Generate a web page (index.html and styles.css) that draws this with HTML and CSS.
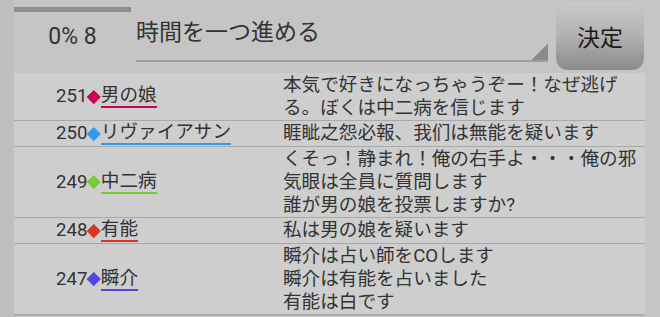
FILE: index.html
```html
<!DOCTYPE html>
<html lang="ja">

<head>
    <meta charset="UTF-8">
    <meta name="viewport" content="width=device-width, initial-scale=1.0">
    <title>ログ</title>
    <link rel="stylesheet" href="styles.css">
</head>

<body>
    <div class="screen">
        <div class="top">
            <div class="turn">
                <div class="bar"></div>
                <div class="count">0% 8</div>
            </div>
            <div class="action">
                <span class="action-text">時間を一つ進める</span>
                <i class="tri"></i>
            </div>
            <button class="decide">決定</button>
        </div>

        <ul class="log">
            <li class="row">
                <div class="who">251<i class="dia c1"></i><span class="name c1">男の娘</span></div>
                <div class="msg">本気で好きになっちゃうぞー！なぜ逃げる。ぼくは中二病を信じます</div>
            </li>
            <li class="row">
                <div class="who">250<i class="dia c2"></i><span class="name c2">リヴァイアサン</span></div>
                <div class="msg">睚眦之怨必報、我们は無能を疑います</div>
            </li>
            <li class="row">
                <div class="who">249<i class="dia c3"></i><span class="name c3">中二病</span></div>
                <div class="msg">くそっ！静まれ！俺の右手よ・・・俺の邪気眼は全員に質問します<br>誰が男の娘を投票しますか?</div>
            </li>
            <li class="row">
                <div class="who">248<i class="dia c4"></i><span class="name c4">有能</span></div>
                <div class="msg">私は男の娘を疑います</div>
            </li>
            <li class="row">
                <div class="who">247<i class="dia c5"></i><span class="name c5">瞬介</span></div>
                <div class="msg">瞬介は占い師をCOします<br>瞬介は有能を占いました<br>有能は白です</div>
            </li>
        </ul>
    </div>
</body>

</html>
```

FILE: styles.css
```css
* {
    margin: 0;
    padding: 0;
    box-sizing: border-box;
}

li {
    list-style-type: none;
}

body {
    background-color: #c5c5c5;
    font-family: Roboto, "Noto Sans CJK JP", sans-serif;
    color: #333;
}

.screen {
    width: 660px;
    height: 317px;
    overflow: hidden;
    padding-left: 14px;
    background: linear-gradient(to right, #bfbfbf 0, #bfbfbf 14px, #c5c5c5 14px);
}

/* 上の操作エリア */
.top {
    display: flex;
    height: 73px;
}

.top .turn {
    width: 117px;
    padding-top: 7px;
}

.top .bar {
    height: 5px;
    background-color: #8e8e8e;
}

.top .count {
    font-size: 23px;
    line-height: 30px;
    text-align: center;
    margin-top: 10px;
}

.top .action {
    position: relative;
    width: 412px;
    height: 62px;
    margin-left: 5px;
    padding-top: 18px;
    border-bottom: 2px solid #9c9c9c;
}

.top .action-text {
    font-size: 23px;
    line-height: 30px;
}

.top .tri {
    position: absolute;
    right: 0;
    bottom: 0;
    width: 16px;
    height: 16px;
    background: linear-gradient(to bottom right, transparent 50%, #8a8a8a 50%);
}

.top .decide {
    width: 88px;
    height: 68px;
    margin: 2px 0 0 8px;
    border: none;
    border-radius: 12px;
    background: linear-gradient(to bottom, #cacaca, #b4b4b4 45%, #8c8c8c);
    font-family: "Noto Sans CJK JP", sans-serif;
    font-size: 23px;
    color: #1a1a1a;
    cursor: pointer;
}

/* ログ一覧 */
.log {
    width: 631px;
    background-color: #cecece;
    border-bottom: 1px solid #b0b0b0;
}

.log .row {
    display: grid;
    grid-template-columns: 269px 1fr;
    min-height: 26px;
    border-bottom: 1px solid #a9a9a9;
    font-size: 18.6px;
    line-height: 23px;
}

.log .who {
    display: flex;
    align-items: center;
    padding-left: 42px;
}

.log .dia {
    width: 9.5px;
    height: 9.5px;
    margin: 0 2px;
    transform: rotate(45deg);
}

.log .name {
    display: inline-block;
    line-height: 21px;
    border-bottom: 2px solid;
    color: #333;
}

.log .msg {
    padding: 1px 6px 0 0;
}

.c1 { background-color: #cc0055; border-color: #cc0055 !important; }
.c2 { background-color: #3399ee; border-color: #3399ee !important; }
.c3 { background-color: #77cc33; border-color: #77cc33 !important; }
.c4 { background-color: #dd3322; border-color: #dd3322 !important; }
.c5 { background-color: #5544dd; border-color: #5544dd !important; }

.log .name.c1,
.log .name.c2,
.log .name.c3,
.log .name.c4,
.log .name.c5 {
    background-color: transparent;
}
```
